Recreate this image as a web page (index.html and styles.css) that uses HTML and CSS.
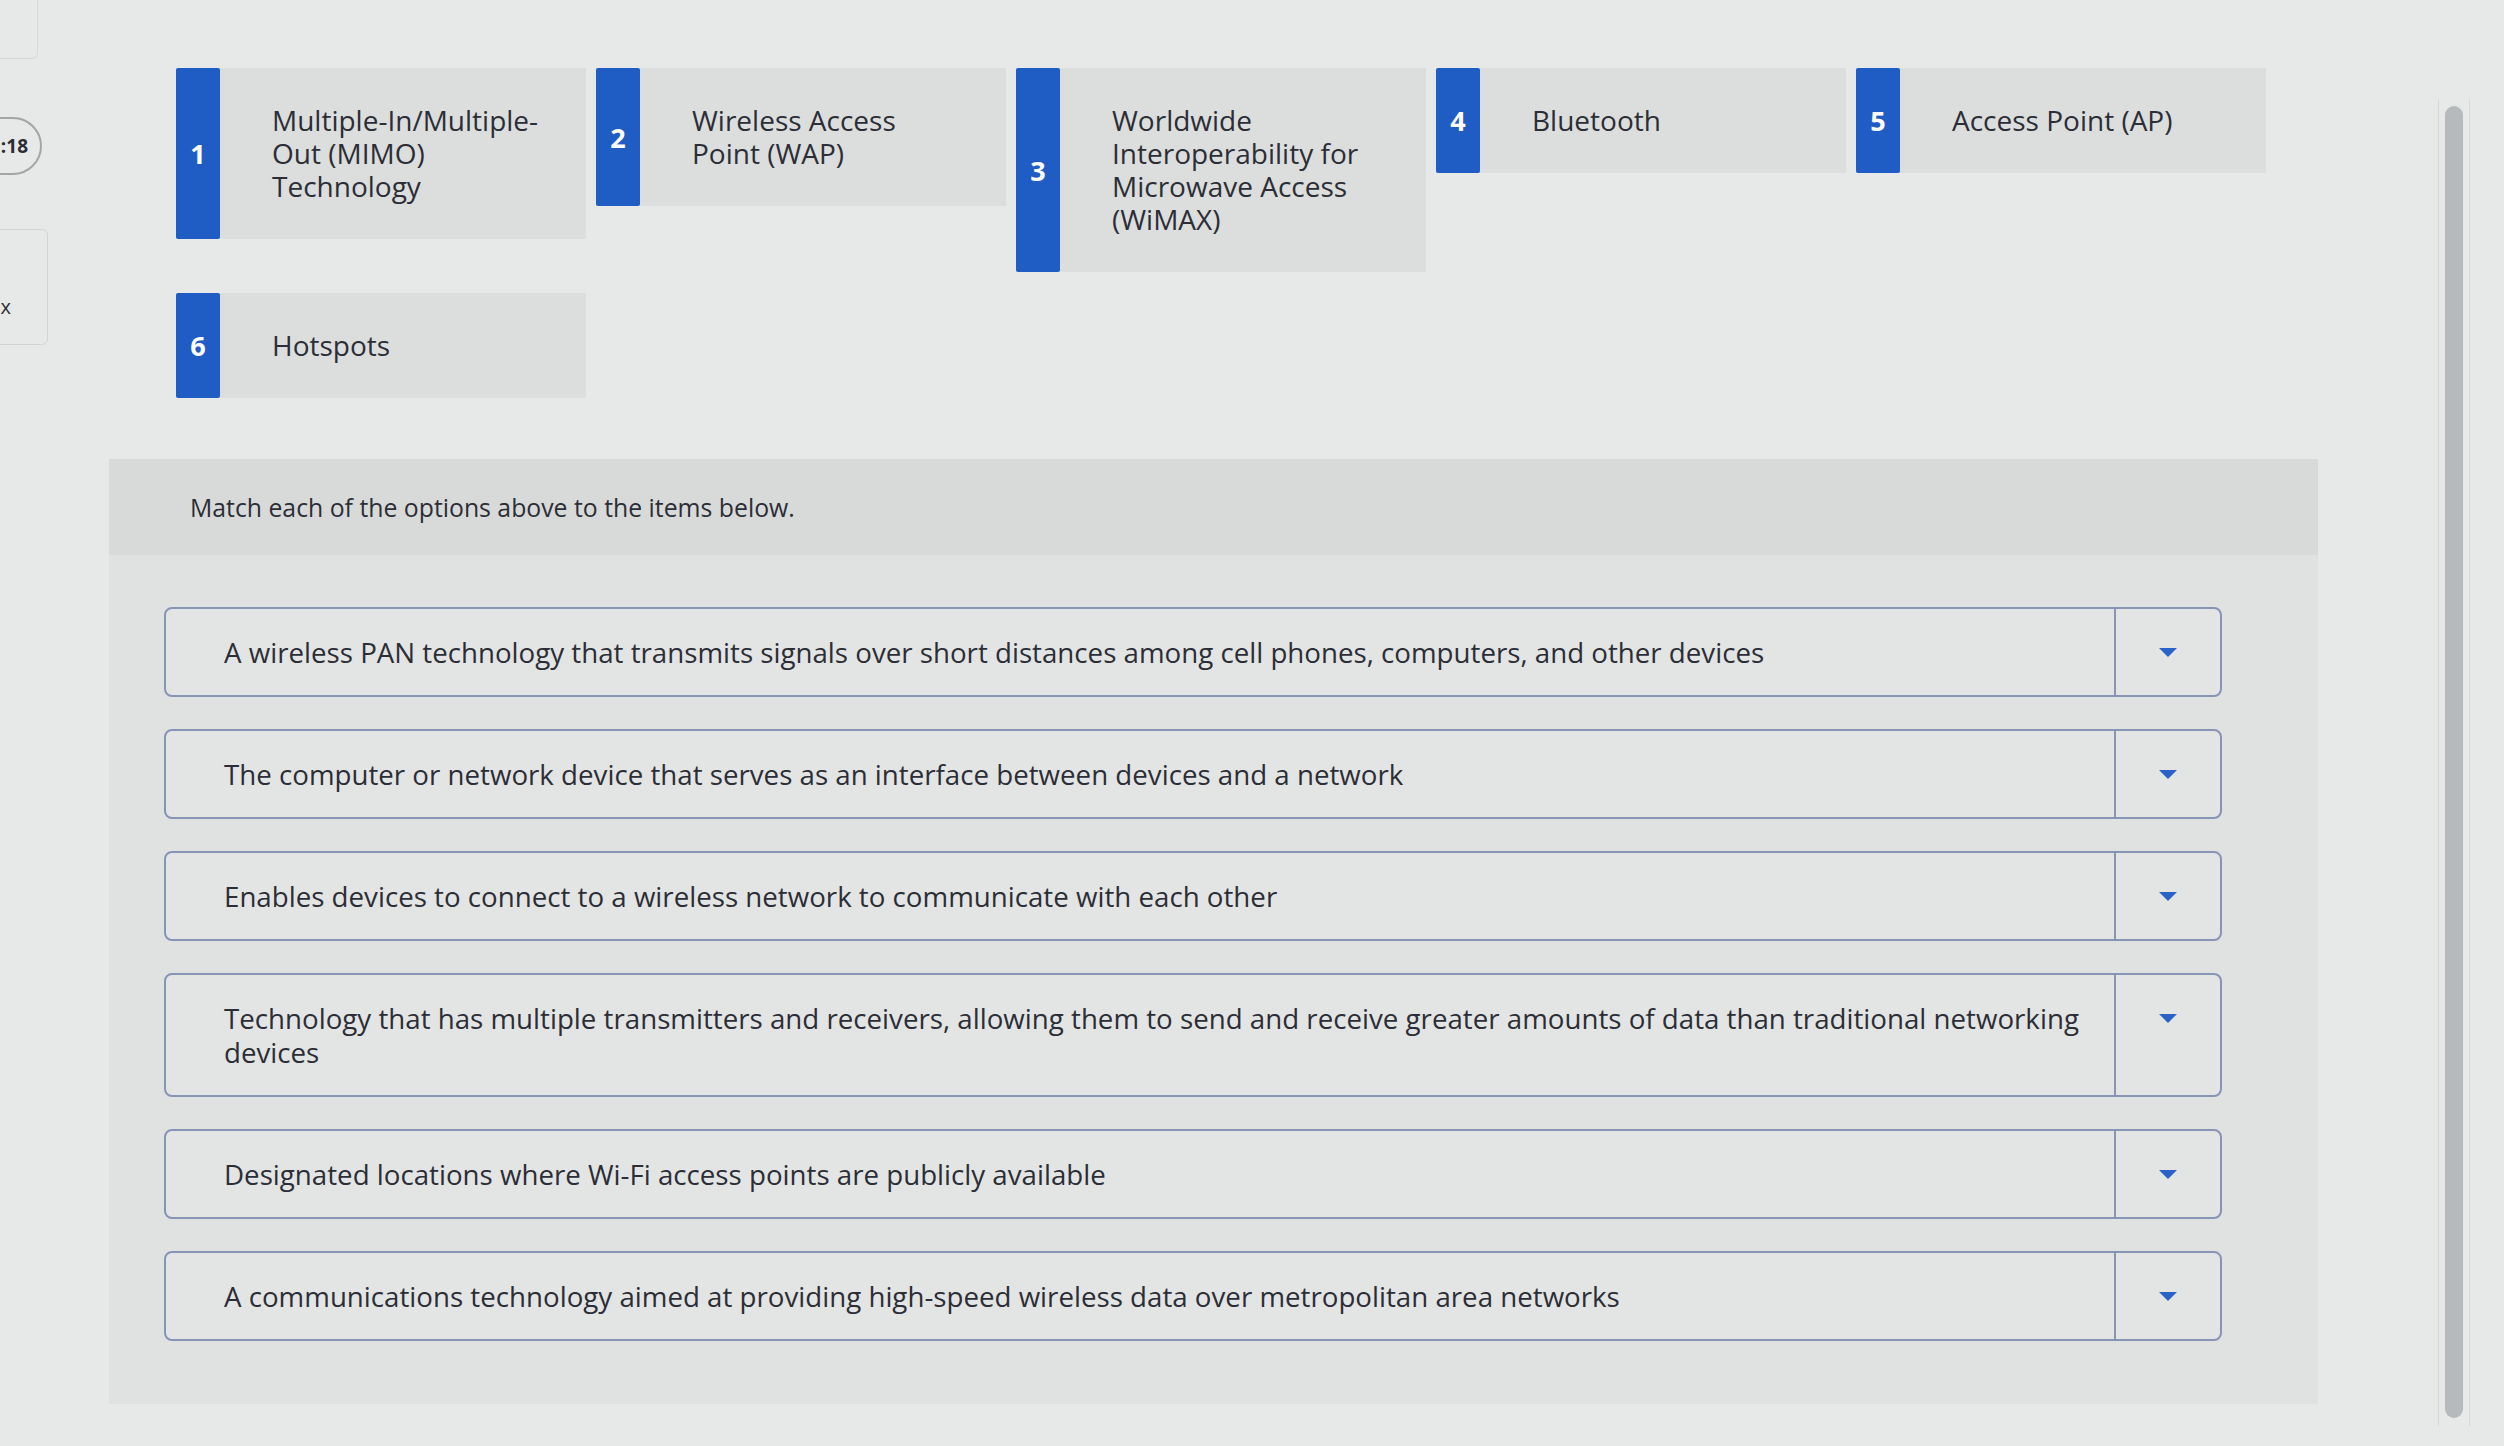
FILE: index.html
```html
<!DOCTYPE html>
<html lang="en">
<head>
  <meta charset="UTF-8" />
  <meta name="viewport" content="width=device-width, initial-scale=1.0"/>
  <title>Matching – Wireless Networking</title>
  <link rel="stylesheet" href="styles.css">
</head>
<body>
  <div class="frame">
    <aside class="side">
      <div class="side-top"></div>
      <div class="timer"><span>:18</span></div>
      <div class="side-box"><span>x</span></div>
    </aside>

    <main class="content">
      <div class="options">
        <div class="card"><div class="card-num">1</div><div class="card-label">Multiple-In/Multiple-Out (MIMO) Technology</div></div>
        <div class="card"><div class="card-num">2</div><div class="card-label">Wireless Access Point (WAP)</div></div>
        <div class="card"><div class="card-num">3</div><div class="card-label">Worldwide Interoperability for Microwave Access (WiMAX)</div></div>
        <div class="card"><div class="card-num">4</div><div class="card-label">Bluetooth</div></div>
        <div class="card"><div class="card-num">5</div><div class="card-label">Access Point (AP)</div></div>
        <div class="card"><div class="card-num">6</div><div class="card-label">Hotspots</div></div>
      </div>

      <section class="panel">
        <div class="panel-head">Match each of the options above to the items below.</div>
        <div class="matches">
          <div class="match">
            <div class="match-text">A wireless PAN technology that transmits signals over short distances among cell phones, computers, and other devices</div>
            <div class="match-btn"><span class="arrow"></span></div>
          </div>
          <div class="match">
            <div class="match-text">The computer or network device that serves as an interface between devices and a network</div>
            <div class="match-btn"><span class="arrow"></span></div>
          </div>
          <div class="match">
            <div class="match-text">Enables devices to connect to a wireless network to communicate with each other</div>
            <div class="match-btn"><span class="arrow"></span></div>
          </div>
          <div class="match">
            <div class="match-text">Technology that has multiple transmitters and receivers, allowing them to send and receive greater amounts of data than traditional networking devices</div>
            <div class="match-btn"><span class="arrow"></span></div>
          </div>
          <div class="match">
            <div class="match-text">Designated locations where Wi-Fi access points are publicly available</div>
            <div class="match-btn"><span class="arrow"></span></div>
          </div>
          <div class="match">
            <div class="match-text">A communications technology aimed at providing high-speed wireless data over metropolitan area networks</div>
            <div class="match-btn"><span class="arrow"></span></div>
          </div>
        </div>
      </section>
    </main>

    <div class="scroll"><div class="thumb"></div></div>
  </div>
</body>
</html>
```

FILE: styles.css
```css
body {
  margin: 0;
  background-color: #e7e9e8;
  font-family: 'Open Sans', Lato, sans-serif;
  color: #2c2e37;
}
.frame {
  display: flex;
  height: 1446px;
  overflow: hidden;
}

/* --- left edge, mostly cut off --- */
.side {
  width: 50px;
  flex: none;
  overflow: hidden;
}
.side-top {
  width: 46px;
  height: 58px;
  margin-left: -10px;
  border: 1px solid #d6d8d7;
  border-top: none;
  border-radius: 0 0 6px 6px;
}
.timer {
  width: 100px;
  height: 58px;
  margin: 58px 0 0 -58px;
  border: 2px solid #a3a6a5;
  border-radius: 30px;
  display: flex;
  align-items: center;
  justify-content: flex-end;
  padding-right: 12px;
  box-sizing: border-box;
  font-size: 19px;
  font-weight: 700;
  color: #2a2c33;
}
.side-box {
  width: 90px;
  height: 116px;
  margin: 54px 0 0 -42px;
  border: 1px solid #d3d5d4;
  border-radius: 6px;
  display: flex;
  align-items: flex-end;
  justify-content: flex-end;
  padding: 0 36px 24px 0;
  box-sizing: border-box;
  font-size: 20px;
}

/* --- main column --- */
.content {
  flex: 1;
  padding: 68px 0 0 59px;
}
.options {
  display: flex;
  flex-wrap: wrap;
  align-items: flex-start;
  gap: 21px 10px;
  margin-left: 67px;
  width: 2100px;
}
.card {
  width: 410px;
  display: flex;
  background-color: #dcdedd;
}
.card-num {
  width: 44px;
  flex: none;
  background-color: #1f5cc4;
  color: white;
  font-size: 27px;
  font-weight: 700;
  border-radius: 2px;
  display: flex;
  align-items: center;
  justify-content: center;
}
.card-label {
  width: 272px;
  padding: 36px 0 36px 52px;
  font-size: 28px;
  line-height: 33px;
}

.panel {
  margin-top: 61px;
  width: 2209px;
  height: 945px;
  background-color: #e0e2e1;
}
.panel-head {
  height: 96px;
  padding-left: 81px;
  background-color: #d8dad9;
  display: flex;
  align-items: center;
  font-size: 24.8px;
}
.matches {
  display: flex;
  flex-direction: column;
  gap: 32px;
  padding: 52px 96px 0 55px;
}
.match {
  display: flex;
  background-color: #e3e5e4;
  border: 2px solid #8794b6;
  border-radius: 8px;
}
.match-text {
  flex: 1;
  padding: 26px 20px 26px 58px;
  font-size: 27.7px;
  line-height: 34px;
}
.match-btn {
  width: 104px;
  flex: none;
  border-left: 2px solid #8794b6;
  display: flex;
  justify-content: center;
  padding-top: 39px;
}
.arrow {
  width: 0;
  height: 0;
  border-left: 9px solid transparent;
  border-right: 9px solid transparent;
  border-top: 9px solid #2a62c8;
}

/* --- scrollbar on the right --- */
.scroll {
  width: 30px;
  flex: none;
  margin: 100px 34px 20px 10px;
  border-left: 1px solid #d7d9d8;
  border-right: 1px solid #d7d9d8;
  display: flex;
  justify-content: center;
  padding-top: 6px;
}
.thumb {
  width: 18px;
  height: 1312px;
  border-radius: 9px;
  background-color: #b7babc;
}
```
